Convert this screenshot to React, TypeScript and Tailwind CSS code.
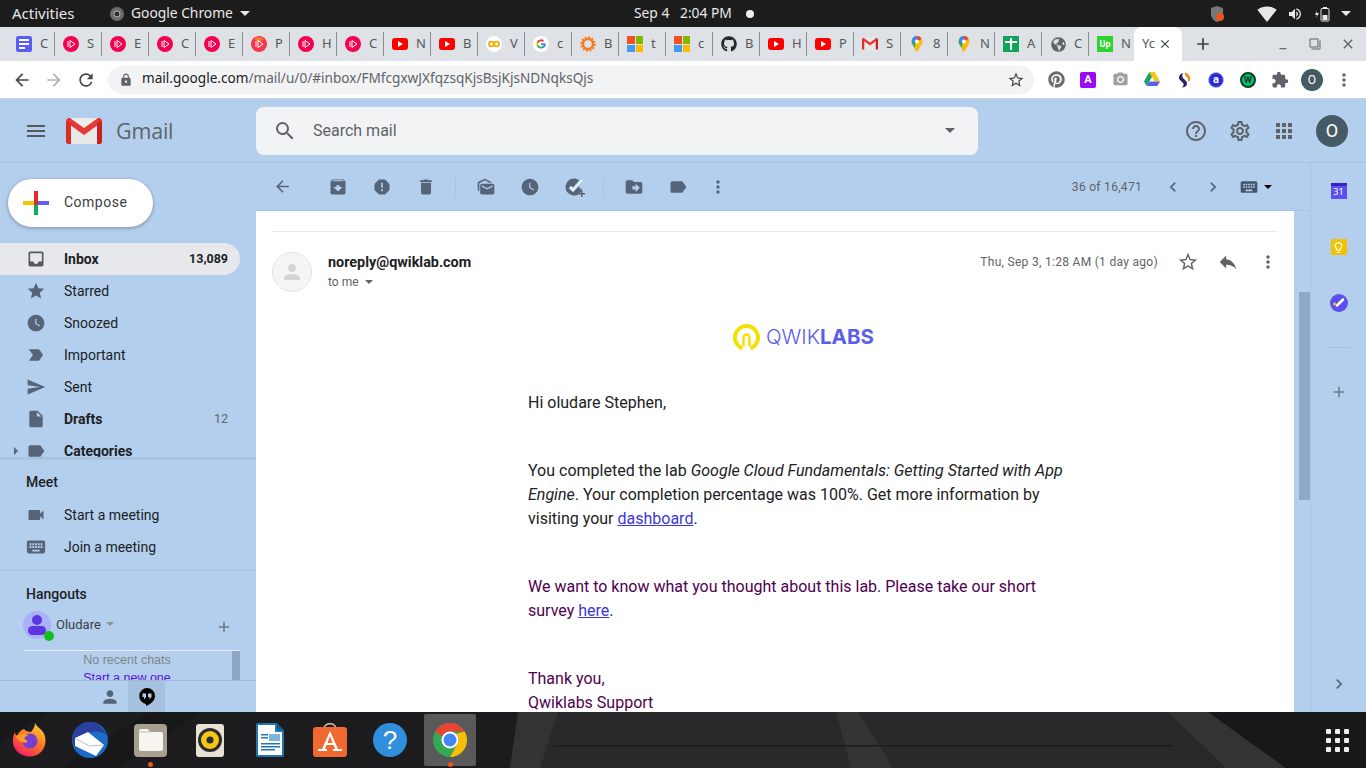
import React from "react"
import { FaGithub, FaGlobeAmericas, FaPinterest } from "react-icons/fa"
import {
  MdAdd,
  MdApps,
  MdArchive,
  MdArrowBack,
  MdArrowForward,
  MdChevronLeft,
  MdChevronRight,
  MdDelete,
  MdDriveFileMove,
  MdExtension,
  MdHelpOutline,
  MdInbox,
  MdInsertDriveFile,
  MdKeyboard,
  MdLabel,
  MdLabelImportant,
  MdLock,
  MdMarkAsUnread,
  MdMenu,
  MdMoreVert,
  MdOutlineLightbulb,
  MdOutlineSettings,
  MdPerson,
  MdPhotoCamera,
  MdRefresh,
  MdReply,
  MdReport,
  MdSearch,
  MdSend,
  MdStar,
  MdStarBorder,
  MdVideocam,
  MdWatchLater,
  MdClose,
  MdMinimize,
  MdFilterNone,
  MdVolumeUp,
  MdSignalWifi4Bar,
} from "react-icons/md"

const Caret = ({ className = "border-t-[#5f6368]" }: { className?: string }) => (
  <span className={`inline-block w-0 h-0 border-x-[4px] border-x-transparent border-t-[4px] ${className}`} />
)

// favicons
const DocIcon = () => (
  <span className="w-4 h-4 rounded-[2px] bg-[#5b5ef5] flex flex-col justify-center gap-[2px] pl-[3px]">
    <span className="h-[2px] w-[10px] bg-white" />
    <span className="h-[2px] w-[10px] bg-white" />
    <span className="h-[2px] w-[6px] bg-white" />
  </span>
)
const RubyIcon = ({ orange }: { orange?: boolean }) => (
  <svg width="16" height="16" viewBox="0 0 16 16">
    <circle cx="8" cy="8" r="8" fill={orange ? "#f6364a" : "#f2024f"} />
    {orange && <path d="M3 3a8 8 0 0 1 10 0L8 6z" fill="#f57c28" />}
    <path d="M5 5v6M7 4.5v7l5-3.5z" fill="none" stroke="#fff" strokeWidth="1" />
  </svg>
)
const YtIcon = () => (
  <span className="w-4 h-3 rounded-[3px] bg-[#f00] flex items-center justify-center">
    <span className="w-0 h-0 border-y-[3px] border-y-transparent border-l-[5px] border-l-white" />
  </span>
)
const ColabIcon = () => (
  <svg width="16" height="16" viewBox="0 0 16 16">
    <circle cx="8" cy="8" r="8" fill="#fff" />
    <circle cx="5.4" cy="8" r="2.4" fill="none" stroke="#f9ab00" strokeWidth="1.8" />
    <circle cx="10.6" cy="8" r="2.4" fill="none" stroke="#f9ab00" strokeWidth="1.8" />
  </svg>
)
const GoogleIcon = () => (
  <svg width="16" height="16" viewBox="0 0 16 16">
    <circle cx="8" cy="8" r="8" fill="#fff" />
    <path d="M12.4 8.2c0-.3 0-.6-.1-.9H8v1.7h2.5a2.2 2.2 0 0 1-.9 1.4v1.200h1.500c.9-.8 1.800-2 1.800-3.400z" fill="#4285f4" />
    <path d="M8 12.600c1.200 0 2.300-.4 3.100-1.100l-1.500-1.200c-.4.300-1 .5-1.600.5-1.200 0-2.200-.8-2.600-1.900H3.800v1.200A4.600 4.600 0 0 0 8 12.600z" fill="#34a853" />
    <path d="M5.400 8.900a2.800 2.800 0 0 1 0-1.800V5.900H3.800a4.600 4.600 0 0 0 0 4.200z" fill="#fbbc05" />
    <path d="M8 5.200c.7 0 1.300.2 1.800.7l1.300-1.300A4.600 4.600 0 0 0 3.800 5.900l1.600 1.200c.4-1.100 1.400-1.900 2.600-1.900z" fill="#ea4335" />
  </svg>
)
const GearIcon = () => (
  <svg width="16" height="16" viewBox="0 0 16 16">
    <circle cx="8" cy="8" r="5" fill="none" stroke="#f57c1f" strokeWidth="2.4" />
    <circle cx="8" cy="8" r="6.800" fill="none" stroke="#f57c1f" strokeWidth="1.800" strokeDasharray="2 1.560" />
  </svg>
)
const MsIcon = () => (
  <span className="w-4 h-4 grid grid-cols-2 gap-[1px]">
    <span className="bg-[#f25022]" />
    <span className="bg-[#7fba00]" />
    <span className="bg-[#3f9bf0]" />
    <span className="bg-[#ffb900]" />
  </span>
)
const GmailM = ({ size = 16 }: { size?: number }) => (
  <svg width={size} height={(size * 26) / 36} viewBox="0 0 36 26">
    <path d="M3 0h30a3 3 0 0 1 3 3v23H3a3 3 0 0 1-3-3V3a3 3 0 0 1 3-3z" fill="#ececec" />
    <path d="M0 26V3l18 13L36 3v23" fill="#e8e8e8" />
    <path d="M0 3a3 3 0 0 1 5-2.300L18 10 31 .7A3 3 0 0 1 36 3v1L18 17 0 4z" fill="#e53935" />
    <path d="M0 3v21a2 2 0 0 0 2 2h3V5z" fill="#d93025" />
    <path d="M36 3v21a2 2 0 0 1-2 2h-3V5z" fill="#c5221f" />
  </svg>
)
const MapsIcon = () => (
  <svg width="16" height="16" viewBox="0 0 16 16">
    <path d="M8 0a5.500 5.500 0 0 0-4.600 8.500L8 16z" fill="#34a853" />
    <path d="M8 0a5.500 5.500 0 0 1 4.600 8.500L8 16 5.500 12z" fill="#fbbc04" />
    <path d="M3.400 2.400A5.500 5.500 0 0 1 8 0l2 3-6 5z" fill="#4285f4" />
    <path d="M8 0a5.500 5.500 0 0 1 4.600 2.400L10 5 8 3z" fill="#ea4335" />
    <circle cx="8" cy="5.500" r="2" fill="#fff" />
  </svg>
)
const CrossIcon = () => (
  <svg width="16" height="16" viewBox="0 0 16 16">
    <rect width="16" height="16" fill="#0ea55a" />
    <path d="M7 2h2v3h5v2H9v7H7V7H2V5h5z" fill="#fff" />
  </svg>
)
const UpIcon = () => (
  <span className="w-4 h-4 bg-[#2fd12f] text-white text-[9px] leading-4 font-bold text-center [font-family:Roboto,sans-serif]">Up</span>
)

const tabs: [React.ReactNode, string][] = [
  [<DocIcon />, "C"],
  [<RubyIcon />, "S"],
  [<RubyIcon />, "E"],
  [<RubyIcon />, "C"],
  [<RubyIcon />, "E"],
  [<RubyIcon orange />, "P"],
  [<RubyIcon />, "H"],
  [<RubyIcon />, "C"],
  [<YtIcon />, "N"],
  [<YtIcon />, "B"],
  [<ColabIcon />, "V"],
  [<GoogleIcon />, "c"],
  [<GearIcon />, "B"],
  [<MsIcon />, "t"],
  [<MsIcon />, "c"],
  [<FaGithub size={16} className="text-[#24292e]" />, "B"],
  [<YtIcon />, "H"],
  [<YtIcon />, "P"],
  [<GmailM />, "S"],
  [<MapsIcon />, "8"],
  [<MapsIcon />, "N"],
  [<CrossIcon />, "A"],
  [<FaGlobeAmericas size={15} className="text-[#5f6368]" />, "C"],
  [<UpIcon />, "N"],
]

const TopBar = () => (
  <div className="h-[27px] bg-[#1c1c1c] flex items-center text-[#e8e8e8] text-[13.800px] [font-family:'Noto_Sans',sans-serif]">
    <span className="ml-3 w-[98px] text-[15px]">Activities</span>
    <svg width="14" height="14" viewBox="0 0 14 14" className="mr-[7px]">
      <circle cx="7" cy="7" r="7" fill="#6b6b6b" />
      <circle cx="7" cy="7" r="3" fill="#2b2b2b" stroke="#b5b5b5" strokeWidth="1" />
    </svg>
    <span className="w-[104px] whitespace-nowrap">Google Chrome</span>
    <Caret className="ml-[5px] !border-x-[5px] !border-t-[5px] border-t-[#e8e8e8]" />
    <span className="ml-[384px] w-[37px] whitespace-nowrap">Sep 4</span>
    <span className="ml-[9px] w-[53px] whitespace-nowrap">2:04 PM</span>
    <span className="ml-[13px] w-2 h-2 rounded-full bg-[#eeeeee]" />
    <svg width="14" height="18" viewBox="0 0 14 18" className="ml-[456px]">
      <path d="M7 1l6 2v6c0 4-3 7-6 8-3-1-6-4-6-8V3z" fill="#777" />
      <circle cx="10" cy="12" r="4" fill="#e8541e" />
    </svg>
    <MdSignalWifi4Bar size={20} className="ml-[33px]" />
    <MdVolumeUp size={16} className="ml-[10px]" />
    <svg width="16" height="16" viewBox="0 0 16 16" className="ml-[12px]">
      <path d="M2 5L0 9h2l-1 3 3-5H2z" fill="#e8e8e8" />
      <rect x="6" y="2.500" width="8" height="12.500" rx="1" fill="none" stroke="#e8e8e8" />
      <rect x="8" y="1" width="4" height="1.500" fill="#e8e8e8" />
      <rect x="7.500" y="9" width="5" height="5" fill="#e8e8e8" />
    </svg>
    <Caret className="ml-[10px] !border-x-[5px] !border-t-[5px] border-t-[#e8e8e8]" />
  </div>
)

const TabStrip = () => (
  <div className="h-[34px] bg-[#dee1e6] flex items-center pl-2 text-[13px] text-[#55585c] [font-family:'Noto_Sans',sans-serif]">
    {tabs.map(([icon, letter], i) => (
      <div key={i} className="w-[47px] h-[24px] shrink-0 flex items-center pl-2 border-r border-[#8a8d92]">
        <span className="w-4 h-4 flex items-center justify-center shrink-0">{icon}</span>
        <span className="ml-[8px] w-[11px] overflow-hidden">{letter}</span>
      </div>
    ))}
    <div className="w-[48px] -ml-[2px] h-[34px] shrink-0 bg-white rounded-t-lg flex items-center pl-2">
      <span className="w-[14px] overflow-hidden whitespace-nowrap">Yc</span>
      <MdClose size={14} className="ml-[2px] text-[#3c4043]" />
    </div>
    <MdAdd size={20} className="ml-[11px] text-[#3c4043]" />
    <MdMinimize size={14} className="ml-[63px] text-[#5f6368]" />
    <MdFilterNone size={12} className="ml-[19px] text-[#5f6368] -scale-x-100" />
    <MdClose size={16} className="ml-[19px] text-[#5f6368]" />
  </div>
)

const DriveIcon = () => (
  <svg width="16" height="15" viewBox="0 0 16 15">
    <path d="M5.300 0h5.400l5.300 9.500h-5.300z" fill="#f9c80e" />
    <path d="M5.300 0L0 9.500 2.700 14l5.300-9.300z" fill="#1aa15f" />
    <path d="M5.400 9.500H16L13.300 14H2.700z" fill="#5b5ef5" />
  </svg>
)

const NavBar = () => (
  <div className="h-[37px] bg-white flex items-center text-[#5f6368]">
    <MdArrowBack size={20} className="ml-3 text-[#44474b]" />
    <MdArrowForward size={20} className="ml-3 text-[#b0b3b6]" />
    <MdRefresh size={20} className="ml-3 text-[#44474b]" />
    <div className="ml-3 w-[926px] h-[28px] rounded-full bg-[#f1f3f4] flex items-center pl-[11px] text-[13.600px] [font-family:'Noto_Sans',sans-serif]">
      <MdLock size={14} className="text-[#5f6368]" />
      <span className="ml-[9px] pb-[2px] text-[#202124]">mail.google.com</span>
      <span className="pb-[2px] text-[#5f6368]">/mail/u/0/#inbox/FMfcgxwJXfqzsqKjsBsjKjsNDNqksQjs</span>
      <MdStarBorder size={18} className="ml-auto mr-[9px] text-[#44474b]" />
    </div>
    <div className="ml-[6px] flex items-center">
      <div className="w-[32px] flex justify-center"><FaPinterest size={17} className="text-[#6a6d70]" /></div>
      <div className="w-[32px] flex justify-center">
        <span className="w-4 h-4 rounded-[2px] bg-[#9a08f5] text-white text-[11px] leading-4 font-bold text-center [font-family:Roboto,sans-serif]">A</span>
      </div>
      <div className="w-[32px] flex justify-center"><MdPhotoCamera size={17} className="text-[#a0a0a0]" /></div>
      <div className="w-[32px] flex justify-center"><DriveIcon /></div>
      <div className="w-[32px] flex justify-center">
        <svg width="16" height="16" viewBox="0 0 16 16">
          <path d="M7 1C3 2 2 6 4 8l3 3c1 1 1 3-1 4.500 5 0 6-4 4-6.500L7 6C6 4.500 6 2.500 7 1z" fill="#2a1f6b" />
          <path d="M9 .5c4 1 6 5 5 8l-2.500 1.500C13 7 11 5 9.500 4c-.5-1-.8-2.500-.5-3.500z" fill="#f68b1f" />
        </svg>
      </div>
      <div className="w-[32px] flex justify-center">
        <span className="w-4 h-4 rounded-full bg-[#2c2cd0] border border-[#a9b4ee] text-white text-[11px] leading-[13px] font-bold text-center [font-family:Roboto,sans-serif]">a</span>
      </div>
      <div className="w-[32px] flex justify-center">
        <span className="w-4 h-4 rounded-full bg-[#03c46a] border-2 border-[#0a3b2a] text-[#0a3b2a] text-[9px] leading-3 font-bold text-center [font-family:Roboto,sans-serif]">W</span>
      </div>
      <div className="w-[32px] flex justify-center"><MdExtension size={18} className="text-[#5f6368]" /></div>
      <div className="w-[32px] flex justify-center">
        <span className="w-[22px] h-[22px] rounded-full bg-[#455a64] text-white text-[12px] leading-[22px] text-center [font-family:Roboto,sans-serif]">O</span>
      </div>
      <div className="w-[32px] flex justify-center"><MdMoreVert size={20} className="text-[#5f6368]" /></div>
    </div>
  </div>
)

const GmailHeader = () => (
  <div className="h-[64px] flex items-center border-b border-[#a5c3e5] text-[#5f6368] shrink-0">
    <MdMenu size={24} className="ml-6 text-[#55595e]" />
    <span className="ml-[18px]"><GmailM size={36} /></span>
    <span className="ml-[14px] w-[140px] pt-px text-[21.500px] tracking-[-0.2px] [font-family:'Open_Sans',sans-serif]">Gmail</span>
    <div className="w-[722px] h-[48px] rounded-lg bg-[#f1f3f4] flex items-center pl-[17px] pr-[23px]">
      <MdSearch size={24} className="text-[#5f6368]" />
      <span className="ml-[16px] pt-px text-[16px] text-[#5f6368]">Search mail</span>
      <Caret className="ml-auto !border-x-[5px] !border-t-[5px]" />
    </div>
    <MdHelpOutline size={24} className="ml-[206px]" />
    <MdOutlineSettings size={24} className="ml-[20px]" />
    <MdApps size={24} className="ml-[20px]" />
    <span className="ml-[20px] w-8 h-8 rounded-full bg-[#455a64] text-white text-[18px] leading-8 text-center">O</span>
  </div>
)

const navItems = [
  { label: "Inbox", Icon: MdInbox, bold: true, count: "13,089", active: true },
  { label: "Starred", Icon: MdStar },
  { label: "Snoozed", Icon: MdWatchLater },
  { label: "Important", Icon: MdLabelImportant },
  { label: "Sent", Icon: MdSend },
  { label: "Drafts", Icon: MdInsertDriveFile, bold: true, count: "12" },
  { label: "Categories", Icon: MdLabel, bold: true },
]

const Sidebar = () => (
  <div className="w-[256px] shrink-0 flex flex-col text-[14px] text-[#202124]">
    <div className="h-[80px] pl-2 pt-4 shrink-0">
      <div className="w-[145px] h-[48px] rounded-full bg-white shadow-[0_1px_3px_1px_rgba(60,64,67,0.3)] flex items-center pl-[15px]">
        <svg width="26" height="26" viewBox="0 0 26 26">
          <rect x="11" y="1" width="4" height="12" fill="#ea2a2a" />
          <rect x="15" y="11" width="11" height="4" fill="#6a5cf5" />
          <rect x="11" y="15" width="4" height="10" fill="#10ad5a" />
          <rect x="0" y="11" width="11" height="4" fill="#fbc400" />
          <rect x="11" y="11" width="4" height="4" fill="#c0392b" />
        </svg>
        <span className="ml-[15px] pb-px text-[14px] tracking-[0.5px] text-[#3c4043]">Compose</span>
      </div>
    </div>
    <div className="h-[215px] shrink-0 overflow-hidden pr-4 border-b border-[#a5c3e5] shadow-[0_1px_2px_rgba(60,64,67,0.15)]">
      {navItems.map(({ label, Icon, bold, count, active }) => (
        <div
          key={label}
          className={`h-8 flex items-center rounded-r-full pr-3 relative ${active ? "bg-[#e6e8ec]" : ""}`}
        >
          {label === "Categories" && (
            <span className="absolute left-[14px] w-0 h-0 border-y-[4px] border-y-transparent border-l-[4px] border-l-[#56647a]" />
          )}
          <Icon size={20} className={`ml-[26px] ${label === "Inbox" ? "text-[#55585c]" : "text-[#56647a]"}`} />
          <span className={`ml-[18px] ${bold ? "font-bold" : ""}`}>{label}</span>
          {count && (
            <span className={`ml-auto text-[12.500px] ${active ? "font-bold" : "text-[#5f6368]"}`}>{count}</span>
          )}
        </div>
      ))}
    </div>
    <div className="h-[113px] shrink-0 border-b border-[#a5c3e5]">
      <div className="h-[41px] pl-[26px] pt-[15px] font-medium leading-[18px]">Meet</div>
      <div className="h-8 flex items-center">
        <MdVideocam size={20} className="ml-[26px] text-[#56647a]" />
        <span className="ml-[18px]">Start a meeting</span>
      </div>
      <div className="h-8 flex items-center">
        <MdKeyboard size={22} className="ml-[25px] text-[#56647a]" />
        <span className="ml-[17px]">Join a meeting</span>
      </div>
    </div>
    <div className="flex-1 min-h-0 overflow-hidden">
      <div className="h-[40px] pl-[26px] pt-[14px] font-medium leading-[18px]">Hangouts</div>
      <div className="h-[39px] flex items-start">
        <span className="ml-[23px] w-[28px] h-[28px] rounded-full bg-[#aab0fb] relative flex flex-col items-center justify-center shrink-0">
          <span className="w-[10px] h-[10px] rounded-full bg-[#5b35e0]" />
          <span className="w-[18px] h-[9px] rounded-full bg-[#5b35e0] mt-[1px]" />
          <span className="absolute -right-[3px] -bottom-[2px] w-[10px] h-[10px] rounded-full bg-[#0fc21a]" />
        </span>
        <span className="ml-[5px] mt-[4px] text-[13px] text-[#3c4043]">Oludare</span>
        <Caret className="ml-[5px] mt-[11px] border-t-[#8a9199]" />
        <MdAdd size={18} className="ml-[101px] mt-[7px] text-[#6c7a8c]" />
      </div>
      <div className="ml-[23px] w-[217px] h-[31px] border-t border-[#e8edf3] flex overflow-hidden">
        <div className="flex-1 text-center pr-[1px] pt-px [font-family:'Liberation_Sans',sans-serif] text-[12.500px]">
          <div className="text-[#80868b] leading-[17px]">No recent chats</div>
          <div className="text-[#5a10d8] leading-[19px]">Start a new one</div>
        </div>
        <div className="w-2 bg-[#8ea7c4] shrink-0" />
      </div>
    </div>
    <div className="h-[32px] shrink-0 border-t border-[#a0b9d6] flex">
      <div className="ml-[92px] w-[36px] flex items-center justify-center">
        <MdPerson size={20} className="text-[#56647a]" />
      </div>
      <div className="w-[37px] flex items-center justify-center bg-[#a5c1de]">
        <svg width="16" height="18" viewBox="0 0 16 18">
          <path d="M8 0a8 8 0 0 0-1 15.900V18c4-1.500 9-5 9-10a8 8 0 0 0-8-8z" fill="#000" />
          <path d="M3.500 5.500h3.500v3.500l-2 2.500v-2.500H3.500zM9 5.500h3.500v3.500l-2 2.500v-2.500H9z" fill="#b3cfed" />
        </svg>
      </div>
    </div>
  </div>
)

const AddTaskIcon = () => (
  <svg width="24" height="24" viewBox="0 0 24 24">
    <path d="M12 3.500a8.500 8.500 0 1 0 8.300 10.300h-2.800v-2h-.5V10l2.300-1.900A8.500 8.500 0 0 0 12 3.500z" fill="#56647a" />
    <path d="M8 12l3 3 9-10" fill="none" stroke="#b3cfed" strokeWidth="3.500" />
    <path d="M8 12l3 3 9-10" fill="none" stroke="#f3f5f8" strokeWidth="1.800" />
    <path d="M19 15.500v2.500h-2.500v1.500H19V22h1.500v-2.500H23V18h-2.500v-2.500z" fill="#56647a" />
  </svg>
)

const ToolBtn = ({ children }: { children: React.ReactNode }) => (
  <div className="w-[44px] flex items-center justify-center text-[#56647a]">{children}</div>
)

const Toolbar = () => (
  <div className="h-[48px] shrink-0 flex items-center pl-1 pr-[38px] border-b border-[#a5c3e5]">
    <ToolBtn><MdArrowBack size={19} /></ToolBtn>
    <div className="w-3" />
    <ToolBtn><MdArchive size={20} /></ToolBtn>
    <ToolBtn><MdReport size={20} /></ToolBtn>
    <ToolBtn><MdDelete size={20} /></ToolBtn>
    <span className="ml-[7px] mr-2 w-px h-5 bg-[#a5c3e5]" />
    <ToolBtn><MdMarkAsUnread size={20} /></ToolBtn>
    <ToolBtn><MdWatchLater size={20} /></ToolBtn>
    <ToolBtn><AddTaskIcon /></ToolBtn>
    <span className="ml-[7px] mr-2 w-px h-5 bg-[#a5c3e5]" />
    <ToolBtn><MdDriveFileMove size={20} /></ToolBtn>
    <ToolBtn><MdLabel size={20} /></ToolBtn>
    <div className="w-9 flex justify-center text-[#56647a]"><MdMoreVert size={20} /></div>
    <span className="ml-auto text-[12px] tracking-[0.3px] text-[#5f6368]">36 of 16,471</span>
    <MdChevronLeft size={20} className="ml-[21px] text-[#56647a]" />
    <MdChevronRight size={20} className="ml-[20px] text-[#56647a]" />
    <MdKeyboard size={20} className="ml-[16px] text-[#44546a]" />
    <Caret className="ml-[5px]" />
  </div>
)

const QwikLogo = () => (
  <div className="h-[28px] flex items-center ml-[461px]">
    <svg width="27" height="27" viewBox="0 0 27 27">
      <path d="M9.570 24.300A11.500 11.500 0 1 1 17.430 24.300" fill="none" stroke="#f2e203" strokeWidth="4" />
      <path d="M10.500 22v-8.500a3 3 0 0 1 6 0V22" fill="none" stroke="#f2e203" strokeWidth="2.500" />
    </svg>
    <span className="ml-[6px] text-[20.500px] text-[#5b5ee8] font-light [font-family:Inter,sans-serif]">QWIK</span>
    <span className="text-[20.500px] text-[#5b5ee8] font-bold [font-family:Inter,sans-serif]">LABS</span>
  </div>
)

const EmailCard = () => (
  <div className="w-[1038px] bg-white overflow-hidden shrink-0 px-4">
    <div className="h-[21px] border-b border-[#e8eaed] w-[1006px]" />
    <div className="pt-5 flex w-[1006px]">
      <span className="w-10 h-10 rounded-full bg-[#f5f5f5] border border-[#e5e5e5] flex items-center justify-center">
        <MdPerson size={24} className="text-[#d5d5d5]" />
      </span>
      <div className="ml-4">
        <div className="mt-px text-[14.400px] font-bold leading-5 text-[#202124]">noreply@qwiklab.com</div>
        <div className="-mt-px flex items-center text-[12px] leading-5 text-[#5f6368]">
          to me
          <Caret className="ml-[6px]" />
        </div>
      </div>
      <div className="ml-auto flex items-start text-[#5f6368]">
        <span className="text-[12px] tracking-[0.3px] leading-5">Thu, Sep 3, 1:28 AM (1 day ago)</span>
        <MdStarBorder size={22} className="ml-[19px] -mt-px" />
        <MdReply size={22} className="ml-[18px] -mt-px" />
        <MdMoreVert size={20} className="ml-[19px]" />
      </div>
    </div>
    <div className="mt-[31px]"><QwikLogo /></div>
    <div className="ml-[256px] w-[550px] mt-[40px] text-[16px] leading-6 text-[#202124]">
      <p>Hi oludare Stephen,</p>
      <p className="mt-[44px]">
        You completed the lab <em>Google Cloud Fundamentals: Getting Started with App<br />Engine</em>. Your completion percentage was 100%. Get more information by
        <br />visiting your <span className="text-[#3c37d8] underline">dashboard</span>.
      </p>
      <p className="mt-[44px] text-[#500050]">
        We want to know what you thought about this lab. Please take our short
        <br />survey <span className="text-[#3c37d8] underline">here</span>.
      </p>
      <p className="mt-[44px] text-[#500050]">
        Thank you,
        <br />Qwiklabs Support
      </p>
    </div>
  </div>
)

const RightPanel = () => (
  <div className="w-[56px] shrink-0 border-l border-[#a5c3e5] flex flex-col items-center relative">
    <div className="h-[56px] flex items-center justify-center mt-[0px]">
      <span className="w-4 h-4 bg-[#5b4ff0] border-t-[3px] border-[#3e1fc0] text-white text-[9px] leading-[11px] text-center [font-family:'Noto_Sans',sans-serif]">31</span>
    </div>
    <div className="h-[56px] flex items-center justify-center">
      <span className="w-4 h-4 bg-[#f3c300] flex items-center justify-center">
        <MdOutlineLightbulb size={13} className="text-white" />
      </span>
    </div>
    <div className="h-[56px] flex items-center justify-center">
      <svg width="18" height="18" viewBox="0 0 18 18">
        <circle cx="9" cy="9" r="9" fill="#5b4ff0" />
        <path d="M7 11.500l6-6" stroke="#fff" strokeWidth="2.500" strokeLinecap="round" />
        <circle cx="4.500" cy="10" r="1.500" fill="#fbc400" />
      </svg>
    </div>
    <div className="mt-[16px] w-[24px] h-px bg-[#a5c3e5]" />
    <MdAdd size={18} className="mt-[35px] text-[#6c7a8c]" />
    <MdChevronRight size={20} className="mt-auto mb-[18px] text-[#56647a]" />
  </div>
)

const Main = () => (
  <div className="flex-1 min-w-0 flex">
    <div className="w-[1054px] shrink-0 flex flex-col">
      <Toolbar />
      <div className="flex-1 min-h-0 flex">
        <EmailCard />
        <div className="flex-1 pt-[81px] pl-[5px]">
          <div className="h-[208px] w-[11px] bg-[#8ea9c8]" />
        </div>
      </div>
    </div>
    <RightPanel />
  </div>
)

// dock
const Firefox = () => (
  <svg width="36" height="36" viewBox="0 0 36 36">
    <defs>
      <linearGradient id="ffa" x1="0.8" y1="0" x2="0.2" y2="1">
        <stop offset="0" stopColor="#ffd23a" />
        <stop offset="0.45" stopColor="#ff7a1f" />
        <stop offset="1" stopColor="#f5156b" />
      </linearGradient>
    </defs>
    <path d="M23 1c1 3 5 5 8 9 4 6 3 14-1 19-7 8-20 7-26-1C0 23 0 16 3 10c0 2 1 3 2 4 1-3 4-6 7-7 1 2 4 3 7 3 2-3 4-5 4-9z" fill="url(#ffa)" />
    <circle cx="18" cy="19" r="7.500" fill="#7440d0" />
    <path d="M4 14c3-2 8-3 12-1l-4 3 4 4c-5 2-10-1-12-6z" fill="#ff9a22" />
  </svg>
)
const Thunderbird = () => (
  <svg width="36" height="36" viewBox="0 0 36 36">
    <circle cx="18" cy="18" r="18" fill="#1a6cc8" />
    <path d="M0 18a18 18 0 0 1 18-18c10 0 13 8 18 14-8-6-16-5-22-2L4 26a18 18 0 0 1-4-8z" fill="#2a3f9e" />
    <path d="M3 16l13-6 16 13-8 11L3 24z" fill="#fff" />
    <path d="M3 16l14 8 15-1" fill="none" stroke="#b5c0cc" strokeWidth="1" />
  </svg>
)
const FilesIcon = () => (
  <span className="w-[33px] h-[33px] rounded-[4px] bg-[#a79f8f] flex items-center justify-center">
    <svg width="25" height="22" viewBox="0 0 25 22">
      <path d="M1 2a2 2 0 0 1 2-2h7l2 3h11a2 2 0 0 1 2 2v15a2 2 0 0 1-2 2H3a2 2 0 0 1-2-2z" fill="#f7f5f0" />
      <path d="M1 3h11" stroke="#dbd6ca" strokeWidth="2" />
    </svg>
  </span>
)
const RhythmIcon = () => (
  <span className="w-[28px] h-[33px] rounded-[3px] bg-[#e8e2d4] flex items-center justify-center">
    <svg width="24" height="24" viewBox="0 0 24 24">
      <circle cx="12" cy="12" r="12" fill="#2b2b2b" />
      <circle cx="12" cy="12" r="9" fill="#f5c518" />
      <circle cx="12" cy="12" r="3.500" fill="#2b2b2b" />
    </svg>
  </span>
)
const WriterIcon = () => (
  <svg width="28" height="34" viewBox="0 0 28 34">
    <path d="M2 0h18l8 8v24a2 2 0 0 1-2 2H2a2 2 0 0 1-2-2V2a2 2 0 0 1 2-2z" fill="#1f78b4" />
    <path d="M2 2h17v7h7v23H2z" fill="#fff" />
    <path d="M21 0l7 7h-7z" fill="#155a8a" />
    <rect x="5" y="11" width="7" height="1.500" fill="#1f78b4" />
    <rect x="5" y="14" width="7" height="1.500" fill="#1f78b4" />
    <rect x="13" y="11" width="11" height="7" fill="#7db5dc" />
    <rect x="5" y="20" width="19" height="1.500" fill="#1f78b4" />
    <rect x="5" y="23" width="19" height="1.500" fill="#1f78b4" />
    <rect x="5" y="26" width="14" height="1.500" fill="#1f78b4" />
  </svg>
)
const StoreIcon = () => (
  <svg width="34" height="34" viewBox="0 0 34 34">
    <path d="M11 6c0-7 12-7 12 0" fill="none" stroke="#e7c9a4" strokeWidth="1.500" />
    <rect y="4" width="34" height="30" rx="3" fill="#f0692e" />
    <path d="M17 8l8 18h4v2h-9v-2h2l-1.500-4h-7L12 26h2v2H5v-2h4z" fill="#fff" />
    <path d="M17 13l-2.500 7h5z" fill="#f0692e" />
  </svg>
)
const HelpIcon = () => (
  <span className="w-[34px] h-[34px] rounded-full bg-[#2f8fdc] text-white text-[26px] leading-[34px] text-center [font-family:'Liberation_Sans',sans-serif]">?</span>
)
const ChromeIcon = () => (
  <svg width="34" height="34" viewBox="0 0 34 34">
    <circle cx="17" cy="17" r="17" fill="#34a853" />
    <path d="M17 0a17 17 0 0 1 14.700 8.500H17a8.500 8.500 0 0 0-8 5.500L2.500 8A17 17 0 0 1 17 0z" fill="#ea4335" />
    <path d="M31.700 8.500A17 17 0 0 1 17 34l7.500-13A8.500 8.500 0 0 0 23 11z" fill="#fbbc05" />
    <circle cx="17" cy="17" r="8.500" fill="#fff" />
    <circle cx="17" cy="17" r="6.500" fill="#4285f4" />
  </svg>
)

const dockApps: { icon: React.ReactNode; running?: boolean; active?: boolean }[] = [
  { icon: <Firefox /> },
  { icon: <Thunderbird /> },
  { icon: <FilesIcon />, running: true },
  { icon: <RhythmIcon /> },
  { icon: <WriterIcon /> },
  { icon: <StoreIcon /> },
  { icon: <HelpIcon /> },
  { icon: <ChromeIcon />, running: true, active: true },
]

const Dock = () => (
  <div className="h-[56px] shrink-0 bg-[#18181a] relative overflow-hidden flex items-center pl-1">
    {/* wallpaper showing through the dock */}
    <svg className="absolute inset-0" width="1366" height="56" viewBox="0 0 1366 56">
      <path d="M50 0h100L60 56H0V30z" fill="#1d1d1f" />
      <path d="M200 0h330l-20 56H120z" fill="#1c1c1e" />
      <rect x="530" y="0" width="760" height="56" fill="#29292c" />
      <path d="M518 0h40l-18 56h-30z" fill="#333334" />
      <path d="M836 0h22l35 56h-42z" fill="#343434" />
      <path d="M1168 0h40l78 56h-60z" fill="#333333" />
      <path d="M1208 0h158v56h-80z" fill="#18181a" />
      <rect x="553" y="33" width="620" height="1.500" fill="#201c1b" />
    </svg>
    {dockApps.map((app, i) => (
      <div
        key={i}
        className={`relative w-[52px] h-[52px] mr-2 shrink-0 rounded-[2px] flex items-center justify-center ${app.active ? "bg-[#59595a]" : ""}`}
      >
        {app.icon}
        {app.running && (
          <span className="absolute bottom-[-1px] w-[5px] h-[5px] rounded-full bg-[#e95420]" />
        )}
      </div>
    ))}
    <div className="relative ml-auto mr-[17px] grid grid-cols-3 gap-[4px]">
      {Array.from({ length: 9 }).map((_, i) => (
        <span key={i} className="w-[5px] h-[5px] rounded-[1px] bg-[#f0f0f0]" />
      ))}
    </div>
  </div>
)

export default function App() {
  return (
    <div className="w-[1366px] h-[768px] overflow-hidden flex flex-col [font-family:Roboto,sans-serif]">
      <TopBar />
      <TabStrip />
      <NavBar />
      <div className="h-px bg-[#c7d5e6] shrink-0" />
      <div className="flex-1 min-h-0 bg-[#b3cfed] flex flex-col">
        <GmailHeader />
        <div className="flex-1 min-h-0 flex">
          <Sidebar />
          <Main />
        </div>
      </div>
      <Dock />
    </div>
  )
}
